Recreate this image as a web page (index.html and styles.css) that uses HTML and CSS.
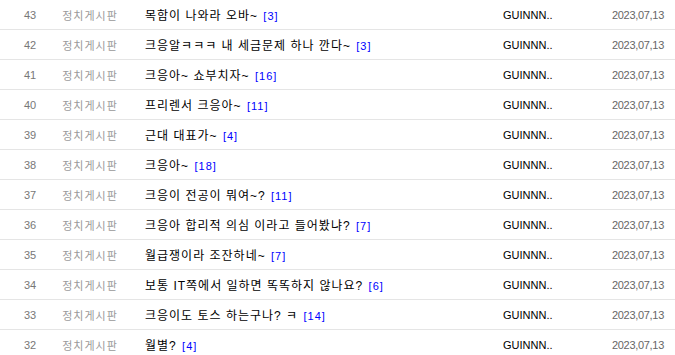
FILE: index.html
```html
<!DOCTYPE html>
<html lang="ko">
<head>
  <meta charset="UTF-8">
  <meta name="viewport" content="width=device-width, initial-scale=1.0">
  <title>정치게시판</title>
  <link rel="stylesheet" href="styles.css">
</head>
<body>
  <table class="board-list">
    <tbody>
      <tr>
        <td class="num">43</td>
        <td class="board">정치게시판</td>
        <td class="subject">목함이 나와라 오바~ <span class="reply">[3]</span></td>
        <td class="writer">GUINNN..</td>
        <td class="date">2023,07,13</td>
      </tr>
      <tr>
        <td class="num">42</td>
        <td class="board">정치게시판</td>
        <td class="subject">크응알ㅋㅋㅋ 내 세금문제 하나 깐다~ <span class="reply">[3]</span></td>
        <td class="writer">GUINNN..</td>
        <td class="date">2023,07,13</td>
      </tr>
      <tr>
        <td class="num">41</td>
        <td class="board">정치게시판</td>
        <td class="subject">크응아~ 쇼부치자~ <span class="reply">[16]</span></td>
        <td class="writer">GUINNN..</td>
        <td class="date">2023,07,13</td>
      </tr>
      <tr>
        <td class="num">40</td>
        <td class="board">정치게시판</td>
        <td class="subject">프리렌서 크응아~ <span class="reply">[11]</span></td>
        <td class="writer">GUINNN..</td>
        <td class="date">2023,07,13</td>
      </tr>
      <tr>
        <td class="num">39</td>
        <td class="board">정치게시판</td>
        <td class="subject">근대 대표가~ <span class="reply">[4]</span></td>
        <td class="writer">GUINNN..</td>
        <td class="date">2023,07,13</td>
      </tr>
      <tr>
        <td class="num">38</td>
        <td class="board">정치게시판</td>
        <td class="subject">크응아~ <span class="reply">[18]</span></td>
        <td class="writer">GUINNN..</td>
        <td class="date">2023,07,13</td>
      </tr>
      <tr>
        <td class="num">37</td>
        <td class="board">정치게시판</td>
        <td class="subject">크응이 전공이 뭐여~? <span class="reply">[11]</span></td>
        <td class="writer">GUINNN..</td>
        <td class="date">2023,07,13</td>
      </tr>
      <tr>
        <td class="num">36</td>
        <td class="board">정치게시판</td>
        <td class="subject">크응아 합리적 의심 이라고 들어봤냐? <span class="reply">[7]</span></td>
        <td class="writer">GUINNN..</td>
        <td class="date">2023,07,13</td>
      </tr>
      <tr>
        <td class="num">35</td>
        <td class="board">정치게시판</td>
        <td class="subject">월급쟁이라 조잔하네~ <span class="reply">[7]</span></td>
        <td class="writer">GUINNN..</td>
        <td class="date">2023,07,13</td>
      </tr>
      <tr>
        <td class="num">34</td>
        <td class="board">정치게시판</td>
        <td class="subject">보통 IT쪽에서 일하면 똑똑하지 않나요? <span class="reply">[6]</span></td>
        <td class="writer">GUINNN..</td>
        <td class="date">2023,07,13</td>
      </tr>
      <tr>
        <td class="num">33</td>
        <td class="board">정치게시판</td>
        <td class="subject">크응이도 토스 하는구나? ㅋ <span class="reply">[14]</span></td>
        <td class="writer">GUINNN..</td>
        <td class="date">2023,07,13</td>
      </tr>
      <tr>
        <td class="num">32</td>
        <td class="board">정치게시판</td>
        <td class="subject">월별? <span class="reply">[4]</span></td>
        <td class="writer">GUINNN..</td>
        <td class="date">2023,07,13</td>
      </tr>
    </tbody>
  </table>
</body>
</html>
```

FILE: styles.css
```css
body {
  margin: 0;
  background-color: #fff;
  font-family: "Liberation Sans", "Noto Sans CJK KR", sans-serif;
}
.board-list {
  width: 675px;
  border-collapse: collapse;
  table-layout: fixed;
}
.board-list td {
  height: 29px;
  padding: 0;
  border-bottom: 1px solid #e5e5e5;
  white-space: nowrap;
  overflow: hidden;
}
.num {
  width: 60px;
  text-align: center;
  font-size: 11px;
  color: #777;
}
.board {
  width: 60px;
  text-align: center;
  font-size: 11px;
  letter-spacing: 1px;
  color: #999;
}
.subject {
  width: 358px;
  padding-left: 25px !important;
  font-size: 12px;
  letter-spacing: 1px;
  color: #000;
}
.reply {
  margin-left: 1px;
  font-size: 11px;
  letter-spacing: 1px;
  color: #0000ff;
}
.writer {
  width: 82px;
  font-size: 11px;
  color: #000;
}
.date {
  text-align: right;
  padding-right: 11px !important;
  font-size: 11px;
  letter-spacing: -0.3px;
  color: #666;
}
```
